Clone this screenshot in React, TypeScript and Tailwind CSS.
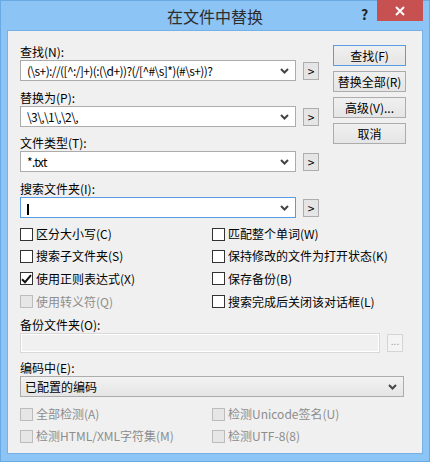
import type { ReactNode } from 'react'

const FONT = { fontFamily: '"Noto Sans CJK SC", "Noto Sans", sans-serif' }

function Chevron() {
  return (
    <svg width="9" height="6" viewBox="0 0 9 6" className="shrink-0">
      <polyline points="1,1 4.5,4.5 8,1" fill="none" stroke="#444" strokeWidth="2" />
    </svg>
  )
}

/** 可编辑下拉框 + 右侧 > 按钮 */
function ComboRow({ value, focused, cursor }: { value?: string; focused?: boolean; cursor?: boolean }) {
  return (
    <div className="flex items-center gap-[7px]">
      <div
        className={`flex h-[21px] w-[276px] items-center border bg-white pl-[6px] pr-[6px] ${
          focused ? 'border-[#569de5]' : 'border-[#acacac]'
        }`}
      >
        <div className="flex-1 overflow-hidden whitespace-nowrap text-[12px] leading-[19px] tracking-[-0.6px] text-black">
          {cursor ? <span className="inline-block h-[11px] w-[2px] bg-black align-middle" /> : value}
        </div>
        <Chevron />
      </div>
      <button className="flex h-[18px] w-[16px] items-center justify-center border border-[#adadad] bg-[#e5e5e5] text-[12px] leading-none text-black">
        &gt;
      </button>
    </div>
  )
}

function Label({ children, className = '' }: { children: ReactNode; className?: string }) {
  return <div className={`h-[17px] text-[12px] leading-[17px] text-black ${className}`}>{children}</div>
}

function ActionButton({ children, primary }: { children: ReactNode; primary?: boolean }) {
  return (
    <button
      className={`flex h-[21px] w-[73px] items-center justify-center border bg-gradient-to-b from-[#f0f0f0] to-[#e5e5e5] text-[12px] leading-none text-black ${
        primary ? 'border-[#569de5]' : 'border-[#acacac]'
      }`}
    >
      {children}
    </button>
  )
}

function Check({
  label,
  checked,
  disabled,
  h = 'h-[22px]',
}: {
  label: string
  checked?: boolean
  disabled?: boolean
  h?: string
}) {
  return (
    <div className={`flex items-center gap-[3px] ${h}`}>
      <span
        className={`flex h-[13px] w-[13px] shrink-0 items-center justify-center border ${
          disabled ? 'border-[#bcbcbc] bg-[#e6e6e6]' : 'border-[#333] bg-white'
        }`}
      >
        {checked && (
          <svg width="11" height="10" viewBox="0 0 11 10">
            <path d="M1 5.2 L4 8.2 L10 1.2" fill="none" stroke="#111" strokeWidth="2" />
          </svg>
        )}
      </span>
      <span className={`whitespace-nowrap text-[12px] leading-none ${disabled ? 'text-[#8d8d8d]' : 'text-black'}`}>
        {label}
      </span>
    </div>
  )
}

export default function App() {
  return (
    <div
      className="flex h-[462px] w-[430px] flex-col border border-[#6aa9e2] bg-[#8cc4f5]"
      style={FONT}
    >
      {/* 标题栏 */}
      <div className="relative flex h-[29px] shrink-0 items-center justify-center">
        <span className="text-[16px] leading-none text-[#2e2e2e]">在文件中替换</span>
        <span className="absolute left-[360px] top-[6px] text-[14px] font-bold leading-none text-[#222]">?</span>
        <div className="absolute left-[376px] top-[-1px] flex h-[21px] w-[46px] items-center justify-center bg-[#c75050]">
          <svg width="10" height="10" viewBox="0 0 10 10">
            <path d="M1 1 L9 9 M9 1 L1 9" stroke="#fff" strokeWidth="2" />
          </svg>
        </div>
      </div>

      {/* 客户区 */}
      <div className="mx-[6px] flex h-[424px] flex-col border border-[#76b0e6] bg-[#f0f0f0] pl-[12px] pt-[12px]">
        <div className="flex gap-[14px]">
          <div className="flex w-[299px] flex-col">
            <Label>查找(N):</Label>
            <ComboRow value="(\s+)://([^:/]+)(:(\d+))?(/[^#\s]*)(#\s+))?" />
            <Label className="mt-[8px]">替换为(P):</Label>
            <ComboRow value="\3\,\1\,\2\," />
            <Label className="mt-[7px]">文件类型(T):</Label>
            <ComboRow value="*.txt" />
            <Label className="mt-[8px]">搜索文件夹(I):</Label>
            <ComboRow focused cursor />
          </div>
          <div className="mt-[2px] flex flex-col gap-[5px]">
            <ActionButton primary>查找(F)</ActionButton>
            <ActionButton>替换全部(R)</ActionButton>
            <ActionButton>高级(V)...</ActionButton>
            <ActionButton>取消</ActionButton>
          </div>
        </div>

        <div className="mt-[5px] grid grid-cols-[192px_1fr]">
          <Check label="区分大小写(C)" />
          <Check label="匹配整个单词(W)" />
          <Check label="搜索子文件夹(S)" />
          <Check label="保持修改的文件为打开状态(K)" />
          <Check label="使用正则表达式(X)" checked h="h-[23px]" />
          <Check label="保存备份(B)" h="h-[23px]" />
          <Check label="使用转义符(Q)" disabled h="h-[23px]" />
          <Check label="搜索完成后关闭该对话框(L)" h="h-[23px]" />
        </div>

        <Label className="mt-[3px]">备份文件夹(O):</Label>
        <div className="flex items-center gap-[7px]">
          <div className="h-[20px] w-[360px] border border-[#d9d9d9] bg-[#f0f0f0] shadow-[inset_0_0_0_1px_#ffffff]" />
          <button className="flex h-[18px] w-[16px] items-center justify-center border border-[#d5d5d5] bg-[#f4f4f4] pb-[4px] text-[10px] leading-none text-[#9a9a9a]">
            ...
          </button>
        </div>

        <Label className="mt-[6px]">编码中(E):</Label>
        <div className="flex h-[21px] w-[384px] items-center border border-[#acacac] bg-gradient-to-b from-[#f2f2f2] to-[#e5e5e5] pl-[4px] pr-[6px]">
          <span className="flex-1 text-[12px] leading-none text-black">已配置的编码</span>
          <Chevron />
        </div>

        <div className="mt-[6px] grid grid-cols-[192px_1fr]">
          <Check label="全部检测(A)" disabled />
          <Check label="检测Unicode签名(U)" disabled />
          <Check label="检测HTML/XML字符集(M)" disabled />
          <Check label="检测UTF-8(8)" disabled />
        </div>
      </div>
    </div>
  )
}
